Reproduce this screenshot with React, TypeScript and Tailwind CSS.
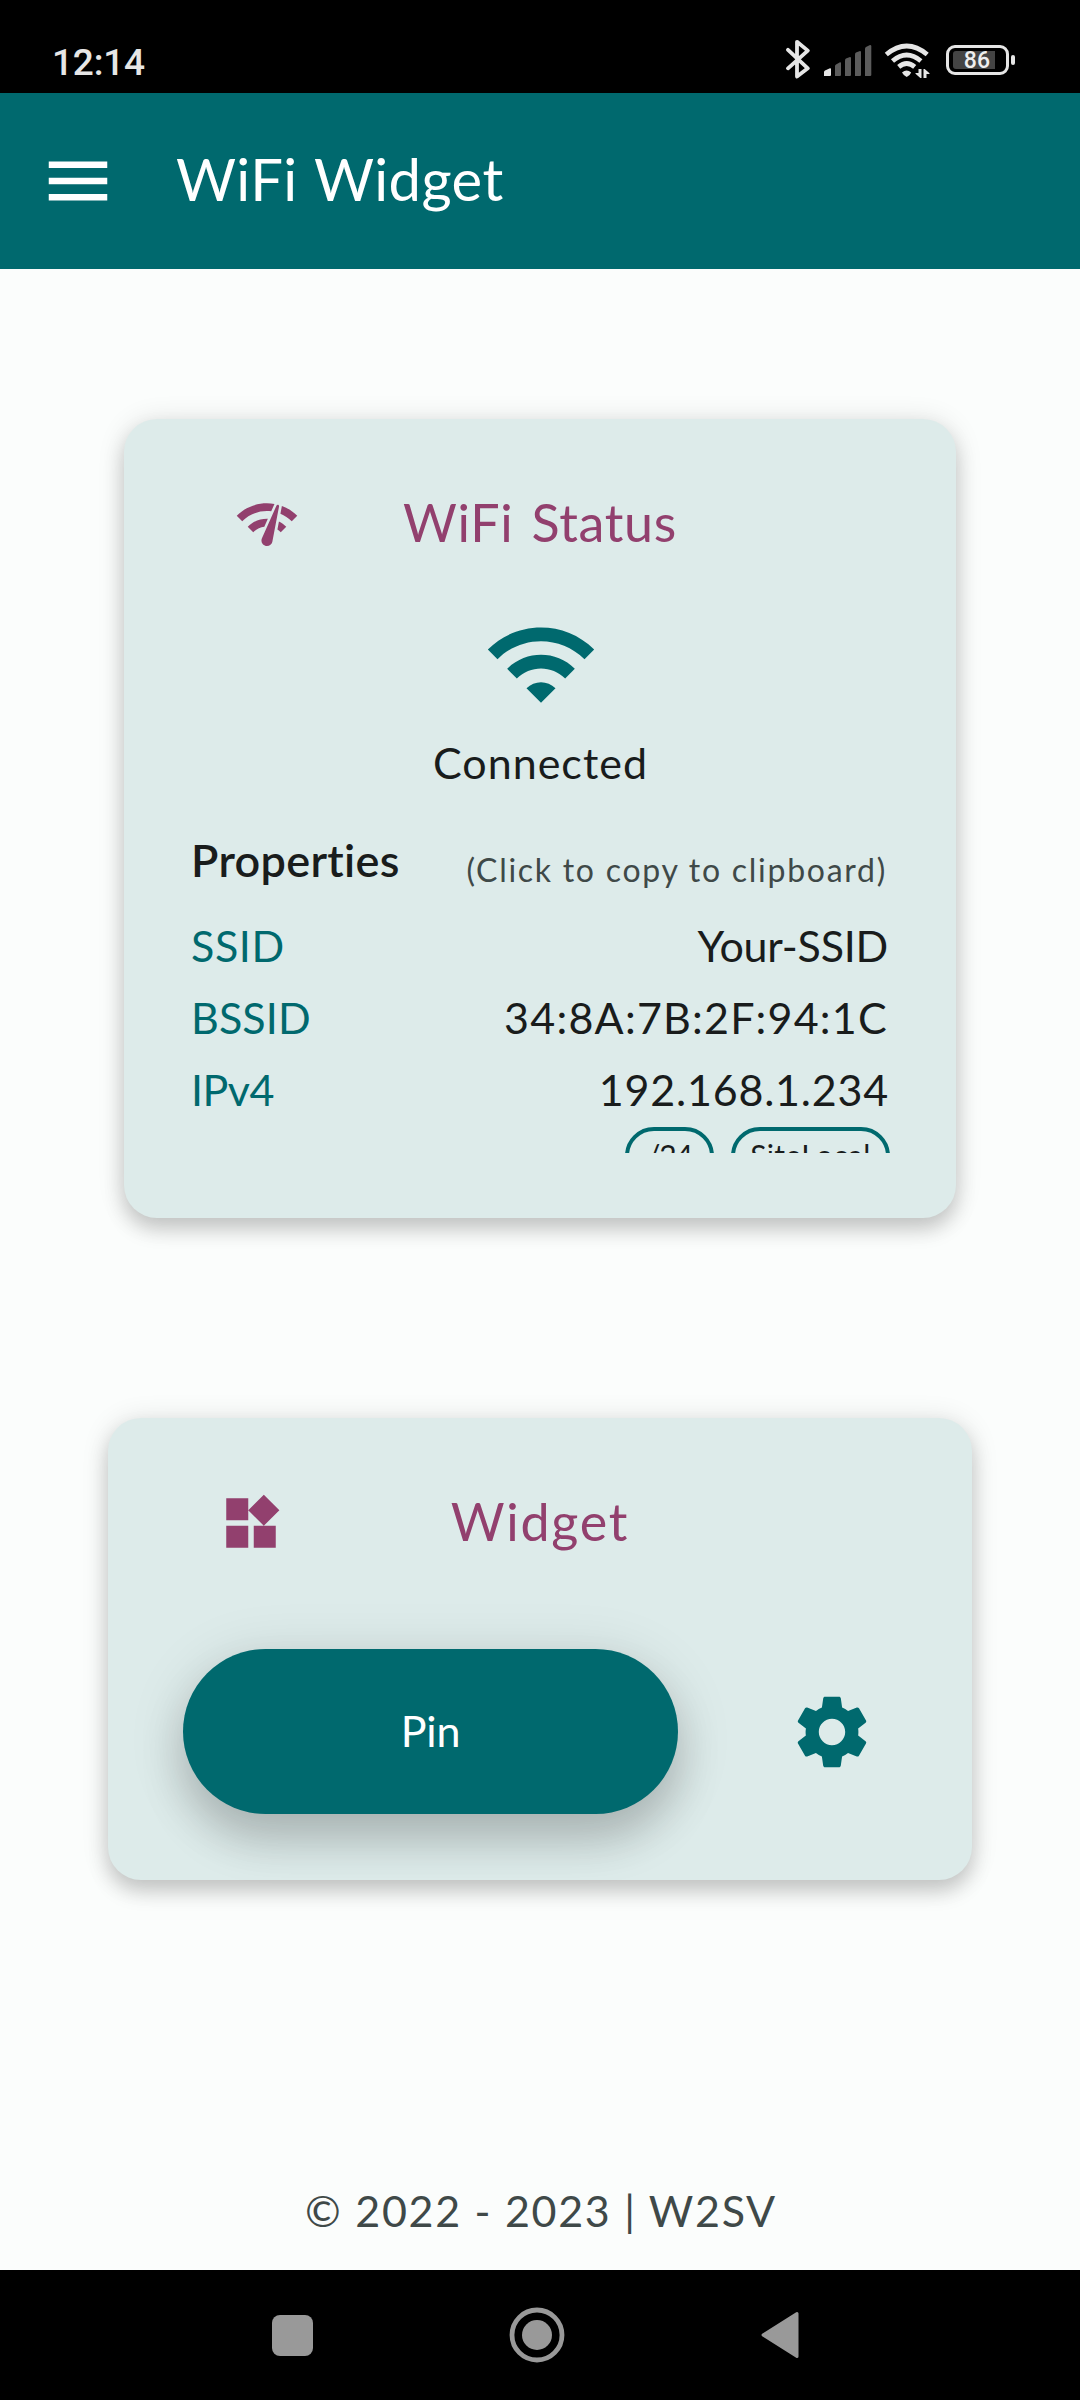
import type { ReactNode } from "react";

type IconProps = { className?: string };

function Glyph({ d, className }: { d: string; className?: string }) {
  return (
    <svg viewBox="0 0 24 24" fill="currentColor" className={className} aria-hidden="true">
      <path d={d} />
    </svg>
  );
}

const icons = {
  menu: "M3 18h18v-2H3v2zm0-5h18v-2H3v2zm0-7v2h18V6H3z",
  networkCheck:
    "M15.9 5c-.17 0-.32.09-.41.23l-.07.15-5.18 11.65c-.16.29-.26.61-.26.96 0 1.11.9 2.01 2.01 2.01.96 0 1.77-.68 1.96-1.59l.01-.03L16.4 5.5c0-.28-.22-.5-.5-.5zM1 9l2 2c2.88-2.88 6.79-4.08 10.53-3.62l1.19-2.68C9.89 3.84 4.74 5.27 1 9zm20 2l2-2c-1.64-1.64-3.55-2.82-5.59-3.57l-.53 2.82c1.5.62 2.9 1.53 4.12 2.75zm-4 4l2-2c-.8-.8-1.7-1.42-2.66-1.89l-.55 2.92c.42.27.83.59 1.21.97zM5 13l2 2c1.13-1.13 2.56-1.79 4.03-2l1.28-2.88c-2.63-.08-5.3.87-7.31 2.88z",
  wifi: "M1 9l2 2c4.97-4.97 13.03-4.97 18 0l2-2C16.93 2.93 7.08 2.93 1 9zm8 8l3 3 3-3c-1.65-1.66-4.34-1.66-6 0zm-4-4l2 2c2.76-2.76 7.24-2.76 10 0l2-2C15.14 9.14 8.87 9.14 5 13z",
  widgets: "M13 13v8h8v-8h-8zM3 21h8v-8H3v8zM3 3v8h8V3H3zm13.66-1.31L11 7.34 16.66 13l5.66-5.66-5.66-5.65z",
  settings:
    "M19.14,12.94c0.04-0.3,0.06-0.61,0.06-0.94c0-0.32-0.02-0.64-0.07-0.94l2.03-1.58c0.18-0.14,0.23-0.41,0.12-0.61 l-1.92-3.32c-0.12-0.22-0.37-0.29-0.59-0.22l-2.39,0.96c-0.5-0.38-1.03-0.7-1.62-0.94L14.4,2.81c-0.04-0.24-0.24-0.41-0.48-0.41 h-3.84c-0.24,0-0.43,0.17-0.47,0.41L9.25,5.35C8.66,5.59,8.12,5.92,7.63,6.29L5.24,5.33c-0.22-0.08-0.47,0-0.59,0.22L2.74,8.87 C2.62,9.08,2.66,9.34,2.86,9.48l2.03,1.58C4.84,11.36,4.8,11.69,4.8,12s0.02,0.64,0.07,0.94l-2.03,1.58 c-0.18,0.14-0.23,0.41-0.12,0.61l1.92,3.32c0.12,0.22,0.37,0.29,0.59,0.22l2.39-0.96c0.5,0.38,1.03,0.7,1.62,0.94l0.36,2.54 c0.05,0.24,0.24,0.41,0.48,0.41h3.84c0.24,0,0.44-0.17,0.47-0.41l0.36-2.54c0.59-0.24,1.13-0.56,1.62-0.94l2.39,0.96 c0.22,0.08,0.47,0,0.59-0.22l1.92-3.32c0.12-0.22,0.07-0.47-0.12-0.61L19.14,12.94z M12,15.6c-1.98,0-3.6-1.62-3.6-3.6 s1.62-3.6,3.6-3.6s3.6,1.62,3.6,3.6S13.98,15.6,12,15.6z",
};

function BluetoothIcon({ className }: IconProps) {
  return (
    <svg viewBox="0 0 26 40" fill="none" stroke="currentColor" strokeWidth="3.8" strokeLinecap="round" strokeLinejoin="round" className={className}>
      <path d="M3 10.8 22.800 29.300 12 37.500V2.800L22.800 11.600 3 29.300" />
    </svg>
  );
}

function SignalIcon({ className }: IconProps) {
  return (
    <svg viewBox="0 0 48 32" className={className}>
      <path d="M0 31V27Q0 26 1 25.500L6 23.200Q7 23 7 24V30Q7 31 6 31Z" fill="#e6e6e6" />
      <g fill="#5c5c5c">
        <path d="M11 31V21Q11 20 12 19.500L16 17.200Q17 17 17 18V30Q17 31 16 31Z" />
        <path d="M21 31V15.500Q21 14 22 13.500L26 12Q27 12 27 13V30Q27 31 26 31Z" />
        <path d="M31 31V9.500Q31 8 32 7.500L36 6Q37 6 37 7V30Q37 31 36 31Z" />
        <path d="M41 31V4Q41 2.500 42 2L46 0Q47.300 0 47.300 1V30Q47.300 31 46 31Z" />
      </g>
    </svg>
  );
}

function WifiBadgeIcon({ className }: IconProps) {
  return (
    <svg viewBox="0 0 48 36" fill="none" stroke="currentColor" strokeWidth="4.800" className={className}>
      <path d="M2.300 11.500Q22.700 -5.500 43.200 11.500" />
      <path d="M8.500 18Q22.700 6 36.900 18" />
      <path d="M14.700 23.800Q22.700 17.200 30.700 23.800" />
      <path d="M18 29.500Q22.700 25.500 27.200 29.500Q26 32.500 22.700 34Q19.500 32.500 18 29.500Z" fill="currentColor" stroke="none" />
      <path d="M34.500 26H37.500V35H36.300L31.500 30.800V30H34.500ZM39.500 35V26H40.700L45.500 30.200V31H42.500V35Z" fill="currentColor" stroke="none" />
    </svg>
  );
}

function Battery() {
  return (
    <div className="flex items-center gap-[2px]">
      <div className="h-[30px] w-[63px] rounded-[9px] border-[3px] border-[#e6e6e6] p-[3px] pl-[4px]">
        <div className="flex h-[18px] w-[42px] items-center justify-end rounded-l-[3px] bg-[#444444] pt-[2px] pr-[5px] font-[Roboto,sans-serif] text-[23px] leading-[18px] font-medium text-[#eeeeee]">
          86
        </div>
      </div>
      <div className="h-[10px] w-[4px] rounded-[2px] bg-[#e6e6e6]" />
    </div>
  );
}

function Card({ className, children }: { className: string; children: ReactNode }) {
  return (
    <section className={`flex flex-col rounded-[33px] bg-[#ddebea] pt-[72px] shadow-[0_12px_20px_rgba(0,0,0,0.17),0_2px_28px_rgba(0,0,0,0.12)] ${className}`}>
      {children}
    </section>
  );
}

function CardHeader({ icon, title }: { icon: string; title: ReactNode }) {
  return (
    <header className="grid h-[66px] w-full grid-cols-[1fr_auto_1fr] items-center pl-[110px] pr-[110px] text-[#92406e]">
      <Glyph d={icon} className="size-[66px]" />
      {title}
      <span />
    </header>
  );
}

function Property({ label, value }: { label: ReactNode; value: ReactNode }) {
  return (
    <div className="flex h-[72px] items-center justify-between pl-[1px]">
      {label}
      {value}
    </div>
  );
}

export default function App() {
  return (
    <div className="flex h-[2400px] w-[1080px] flex-col overflow-hidden bg-[#fbfdfc] font-[Lato,sans-serif] text-[43px] leading-[50px] whitespace-nowrap text-[#191c1c]">
      <div className="flex h-[93px] shrink-0 justify-between bg-black pr-[65px] pl-[52px] text-[#e6e6e6]">
        <time className="pt-[43px] font-[Roboto,sans-serif] text-[37px] leading-[40px] font-medium tracking-[-0.2px]">12:14</time>
        <div className="flex items-start pt-[39px]">
          <BluetoothIcon className="h-[40px] w-[26px]" />
          <SignalIcon className="mt-[6px] ml-[13px] h-[32px] w-[48px]" />
          <WifiBadgeIcon className="mt-[4px] ml-[12px] h-[36px] w-[48px]" />
          <div className="mt-[6px] ml-[14px]">
            <Battery />
          </div>
        </div>
      </div>

      <header className="flex h-[176px] shrink-0 items-center bg-[#00696e] pl-[39px] text-white">
        <Glyph d={icons.menu} className="size-[78px]" />
        <h1 className="ml-[59px] pb-[4px] text-[58px] leading-[70px] tracking-[0.4px] [word-spacing:2px]">WiFi Widget</h1>
      </header>

      <main className="flex flex-1 flex-col items-center pt-[150px]">
        <Card className="h-[799px] w-[832px]">
          <CardHeader
            icon={icons.networkCheck}
            title={<h2 className="pb-1 text-[52px] leading-[60px] tracking-[0.7px] [word-spacing:4px]">WiFi Status</h2>}
          />
          <Glyph d={icons.wifi} className="mt-[49px] ml-[359px] size-[116px] text-[#00696e]" />
          <p className="mt-[16px] self-center pl-px tracking-[1px]">Connected</p>
          <div className="mt-[45px] flex h-[57px] items-start justify-between pr-[69px] pl-[67px]">
            <h3 className="text-[45px] leading-[54px] font-semibold tracking-[0.3px]">Properties</h3>
            <p className="pt-[17px] text-[32px] leading-[40px] tracking-[1.73px] text-[#3f4948]">(Click to copy to clipboard)</p>
          </div>
          <div className="mt-[20px] h-[243px] overflow-hidden pr-[66px] pl-[66px]">
            <Property label={<span className="tracking-[0.6px] text-[#00696e]">SSID</span>} value={<span className="pr-[2px] tracking-[-0.24px]">Your-SSID</span>} />
            <Property label={<span className="tracking-[0.1px] text-[#00696e]">BSSID</span>} value={<span className="pr-[2px] tracking-[1.24px]">34:8A:7B:2F:94:1C</span>} />
            <Property label={<span className="tracking-[-0.5px] text-[#00696e]">IPv4</span>} value={<span className="pr-px tracking-[0.8px]">192.168.1.234</span>} />
            <div className="mt-[1px] flex justify-end gap-[17px] text-[30px] leading-[38px]">
              <span className="flex h-[58px] w-[89px] justify-center rounded-[29px] border-4 border-[#00696e] pt-[5px] tracking-[-1px]">/24</span>
              <span className="flex h-[58px] w-[159px] justify-center rounded-[29px] border-4 border-[#00696e] pt-[5px] tracking-[0.4px]">SiteLocal</span>
            </div>
          </div>
        </Card>

        <Card className="mt-[200px] h-[462px] w-[864px]">
          <CardHeader icon={icons.widgets} title={<h2 className="pb-1 text-[52px] leading-[60px] tracking-[1.8px]">Widget</h2>} />
          <div className="mt-[93px] flex h-[165px] items-center pl-[75px]">
            <button className="h-[165px] w-[495px] rounded-full bg-[#00696e] pb-[1px] tracking-[-0.2px] text-white shadow-[0_28px_44px_rgba(0,0,0,0.17),0_8px_60px_rgba(0,0,0,0.12)]">
              Pin
            </button>
            <button className="ml-[110px] text-[#00696e]">
              <Glyph d={icons.settings} className="size-[88px]" />
            </button>
          </div>
        </Card>

        <footer className="mt-auto mb-[34px] pl-[2px] tracking-[1.7px] text-[#3f4948]">© 2022 - 2023 | W2SV</footer>
      </main>

      <nav className="flex h-[130px] shrink-0 items-center bg-black pl-[272px] text-[#999999]">
        <span className="size-[41px] rounded-[8px] bg-[#999999]" />
        <svg viewBox="0 0 56 56" className="ml-[196px] size-[56px]">
          <circle cx="28" cy="28" r="25" fill="none" stroke="currentColor" strokeWidth="4.800" />
          <circle cx="28" cy="28" r="15" fill="currentColor" />
        </svg>
        <svg viewBox="0 0 38 48" className="ml-[196px] h-[48px] w-[38px]">
          <path d="M2 24 36 2.500V45.500Z" fill="currentColor" stroke="currentColor" strokeWidth="3" strokeLinejoin="round" />
        </svg>
      </nav>
    </div>
  );
}
